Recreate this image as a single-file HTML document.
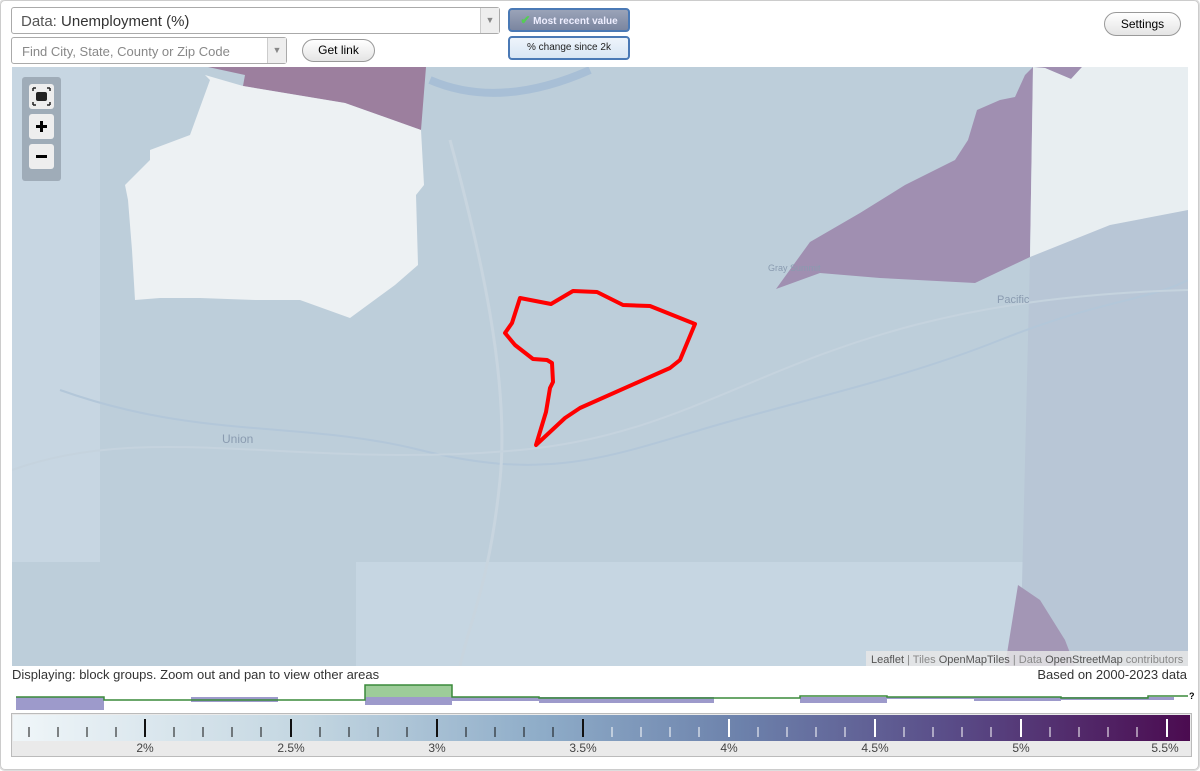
<!DOCTYPE html>
<html><head><meta charset="utf-8"><style>
body{margin:0;width:1200px;height:771px;background:#fff;font-family:"Liberation Sans",Arial,sans-serif;position:relative;overflow:hidden}
.frame{position:absolute;left:0;top:0;width:1197px;height:768px;border:1px solid #ccc;border-radius:5px;box-shadow:0 0 0 1px #ddd}
.sel{position:absolute;background:#fff;border:1px solid #aaa;border-radius:3px;box-sizing:border-box}
.arrow{position:absolute;right:0;top:0;bottom:0;width:18px;border-left:1px solid #ccc;background:#eee;color:#888;font-size:9px;text-align:center}
.btn{position:absolute;border:1px solid #999;border-radius:12px;background:linear-gradient(#fff,#e4e4e4);font-size:12px;text-align:center;box-sizing:border-box}
.tog{position:absolute;border:2px solid #4a79b5;border-radius:4px;box-sizing:border-box;font-size:10px;text-align:center}
</style></head><body>
<div class="frame"></div>
<div class="sel" style="left:11px;top:7px;width:489px;height:27px;font-size:15px;color:#333;padding:5px 0 0 9px"><span style="color:#555">Data:</span> Unemployment (%)<div class="arrow" style="line-height:25px">▼</div></div>
<div class="sel" style="left:11px;top:37px;width:276px;height:27px;font-size:13px;color:#888;padding:6px 0 0 10px">Find City, State, County or Zip Code<div class="arrow" style="line-height:25px">▼</div></div>
<div class="btn" style="left:302px;top:39px;width:73px;height:23px;line-height:21px">Get link</div>
<div class="tog" style="left:508px;top:8px;width:122px;height:24px;background:linear-gradient(#9aa3b8,#7b86a0);color:#eef;font-weight:bold;line-height:20px"><span style="color:#5c5;font-size:12px">✔</span> Most recent value</div>
<div class="tog" style="left:508px;top:36px;width:122px;height:24px;background:linear-gradient(#eef4fb,#d8e6f4);color:#222;line-height:20px">% change since 2k</div>
<div class="btn" style="left:1104px;top:12px;width:77px;height:24px;line-height:22px">Settings</div>

<svg style="position:absolute;left:12px;top:67px" width="1176" height="599" viewBox="12 67 1176 599">
<rect x="12" y="67" width="1176" height="599" fill="#bdceda"/>
<rect x="12" y="67" width="88" height="495" fill="#c7d6e2"/>
<rect x="356" y="562" width="768" height="104" fill="#c6d6e2"/>
<polygon points="1030,257 1110,225 1188,210 1188,666 1020,666" fill="#b8c6d6"/>
<path d="M430,80 Q500,110 590,70" stroke="#a8bfd6" stroke-width="8" fill="none"/>
<path d="M60,390 C200,440 300,420 420,450 S600,460 700,430 S900,380 1000,340 1150,300 1188,280" stroke="#b3c7d9" stroke-width="2" fill="none"/>
<path d="M450,140 C480,250 510,380 500,480 S470,620 460,666" stroke="#c8d5df" stroke-width="3" fill="none"/>
<path d="M12,470 C150,420 300,470 520,450 S800,300 1188,290" stroke="#c5d3de" stroke-width="2" fill="none"/>
<polygon points="208,67 426,67 421,130 345,103 243,86 245,75" fill="#9c7f9e"/>
<polygon points="205,75 243,86 345,103 421,130 424,185 416,195 418,265 395,285 350,318 300,300 255,300 200,298 160,298 135,300 132,250 128,200 125,185 150,160 150,150 190,135 210,80" fill="#edf1f3"/>
<polygon points="776,289 810,242 860,213 905,185 955,160 968,140 977,110 1000,100 1015,97 1025,75 1033,67 1030,257 975,283 880,278 820,273" fill="#a08fb1"/>
<polygon points="1033,67 1082,67 1071,79 1045,68" fill="#a08fb1"/>
<polygon points="1033,67 1045,68 1071,79 1082,67 1188,67 1188,210 1110,225 1030,257" fill="#e8eef1"/>
<polygon points="1005,666 1018,585 1040,600 1065,640 1075,666" fill="#a396b5"/>
<polygon points="520,298 551,304 573,291 597,292 623,305 650,306 695,324 680,360 670,368 580,408 565,418 536,445 546,412 550,388 553,382 552,363 547,360 533,359 515,345 505,333 512,323" fill="none" stroke="#f00" stroke-width="4" stroke-linejoin="round"/>
<text x="222" y="443" font-size="12" fill="#8a9bb0" font-family="Liberation Sans">Union</text>
<text x="768" y="271" font-size="9" fill="#8a9bb0" font-family="Liberation Sans">Gray Summit</text>
<text x="997" y="303" font-size="11" fill="#8a9bb0" font-family="Liberation Sans">Pacific</text>
<rect x="22" y="77" width="39" height="104" rx="3" fill="#8f9aa6" opacity=".7"/>
<rect x="29" y="84" width="25" height="25" rx="3" fill="#eee"/>
<rect x="29" y="114" width="25" height="25" rx="3" fill="#eee"/>
<rect x="29" y="144" width="25" height="25" rx="3" fill="#eee"/>
<rect x="36" y="92" width="11" height="9" rx="2" fill="#222"/>
<path d="M33,88h3M33,88v3M50,88h-3M50,88v3M33,105h3M33,105v-3M50,105h-3M50,105v-3" stroke="#222" stroke-width="1.5"/>
<path d="M41.5,121v11M36,126.5h11" stroke="#000" stroke-width="3"/>
<path d="M36,156.5h11" stroke="#000" stroke-width="3"/>
<rect x="866" y="651" width="322" height="15" fill="#e6e6e6" opacity=".85"/>
<text x="871" y="663" font-size="11" fill="#888" font-family="Liberation Sans"><tspan fill="#555">Leaflet</tspan> | Tiles <tspan fill="#555">OpenMapTiles</tspan> | Data <tspan fill="#555">OpenStreetMap</tspan> contributors</text>
</svg>

<div style="position:absolute;left:12px;top:667px;font-size:13px;color:#333">Displaying: block groups. Zoom out and pan to view other areas</div>
<div style="position:absolute;right:13px;top:667px;font-size:13px;color:#333">Based on 2000-2023 data</div>

<svg style="position:absolute;left:0;top:680px" width="1200" height="35">
<g fill="#9d9acb">
<rect x="16" y="17" width="88" height="13"/><rect x="191" y="17" width="87" height="5"/><rect x="365" y="17" width="87" height="8"/><rect x="452" y="17" width="87" height="4"/><rect x="539" y="17" width="175" height="6"/><rect x="800" y="17" width="87" height="6"/><rect x="887" y="17" width="87" height="2"/><rect x="974" y="17" width="87" height="4"/><rect x="1061" y="17" width="113" height="3"/>
</g>
<rect x="365" y="5" width="87" height="12" fill="#9dcc99"/>
<path d="M16,17H104V20H365V5H452V17H539V18H800V16H887V17H1061V18H1148V16H1188" stroke="#3a8a3a" stroke-width="1.5" fill="none"/>
<text x="1189" y="19" font-size="9" font-weight="bold" fill="#000">?</text>
</svg>

<svg style="position:absolute;left:11px;top:713px" width="1182" height="44">
<defs><linearGradient id="g" x1="0" x2="1"><stop offset="0" stop-color="#f0f6f9"/><stop offset=".25" stop-color="#c3d6e1"/><stop offset=".45" stop-color="#8eacc8"/><stop offset=".62" stop-color="#6c81ab"/><stop offset=".8" stop-color="#594b87"/><stop offset="1" stop-color="#4b0b50"/></linearGradient></defs>
<rect x="0.5" y="0.5" width="1180" height="43" fill="#eaeaea" stroke="#bbb"/>
<rect x="2" y="2" width="1177" height="26" fill="url(#g)"/>
<g stroke="#111" stroke-width="1">
<path d="M18,14v10M47,14v10M76,14v10M105,14v10M163,14v10M192,14v10M221,14v10M250,14v10M309,14v10M338,14v10M367,14v10M396,14v10M455,14v10M484,14v10M513,14v10M542,14v10"/>
<path d="M134,6v18M280,6v18M426,6v18M572,6v18" stroke-width="2"/>
</g>
<g stroke="#fff" stroke-width="1">
<path d="M601,14v10M630,14v10M659,14v10M688,14v10M747,14v10M776,14v10M805,14v10M834,14v10M893,14v10M922,14v10M951,14v10M980,14v10M1039,14v10M1068,14v10M1097,14v10M1126,14v10"/>
<path d="M718,6v18M864,6v18M1010,6v18M1156,6v18" stroke-width="2"/>
</g>
<g font-size="12" fill="#444" text-anchor="middle" font-family="Liberation Sans">
<text x="134" y="39">2%</text><text x="280" y="39">2.5%</text><text x="426" y="39">3%</text><text x="572" y="39">3.5%</text><text x="718" y="39">4%</text><text x="864" y="39">4.5%</text><text x="1010" y="39">5%</text><text x="1154" y="39">5.5%</text>
</g>
</svg>
</body></html>
